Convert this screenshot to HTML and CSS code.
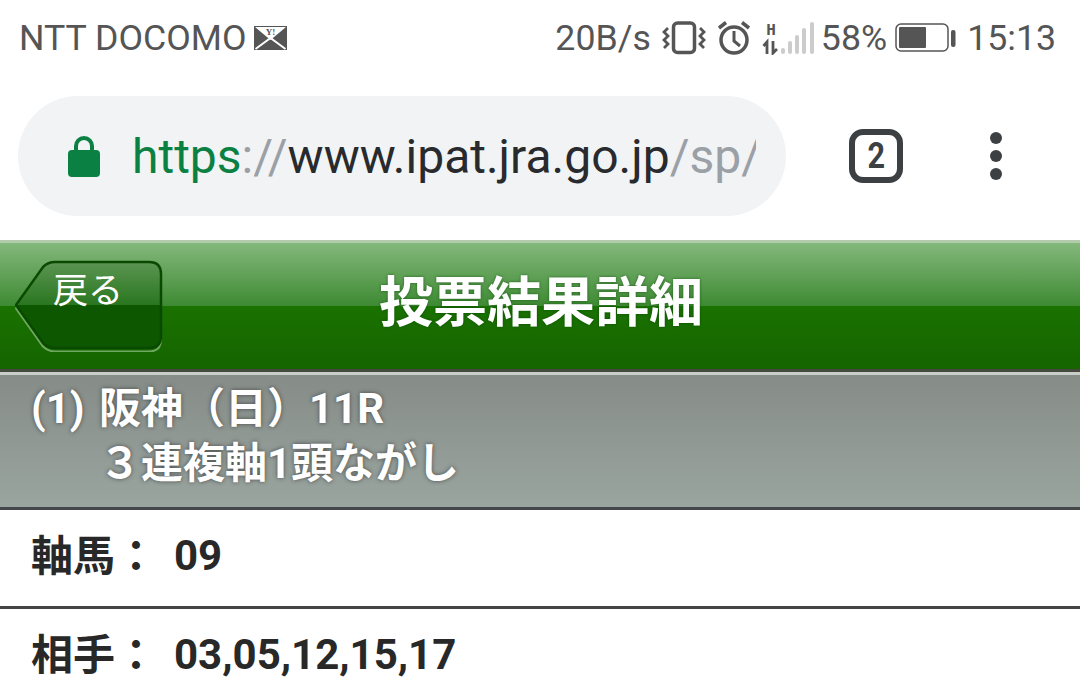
FILE: index.html
```html
<html>
  <head>
    <title>投票結果詳細</title>
    <link rel="stylesheet" href="styles.css">
  </head>
  <body>
    <div class="statusBar">
      <div class="statusLeft">
        <span>NTT DOCOMO</span>
        <svg class="mailIcon" width="33" height="24" viewBox="0 0 33 24">
          <rect width="33" height="24" fill="#555"/>
          <path d="M1 1H32L16.500 14Z" fill="#fff"/>
          <path d="M1.500 23L16.500 12L31.500 23" fill="none" stroke="#fff" stroke-width="2"/>
          <text x="16.500" y="9" font-family="Liberation Serif" font-size="9" font-weight="700" text-anchor="middle" fill="#555">Y!</text>
        </svg>
      </div>
      <div class="statusRight">
        <span class="speed">20B/s</span>
        <svg class="vibrateIcon" width="44" height="34" viewBox="0 0 44 34">
          <rect x="11.500" y="2" width="21" height="29.500" rx="4" fill="none" stroke="#555" stroke-width="3.500"/>
          <path d="M6 6L2 10L6 14L2 18L6 22L2 26M38 6L42 10L38 14L42 18L38 22L42 26" transform="translate(0 1)" fill="none" stroke="#555" stroke-width="2.800"/>
        </svg>
        <svg class="alarmIcon" width="34" height="34" viewBox="0 0 34 34">
          <circle cx="17" cy="19" r="13" fill="none" stroke="#555" stroke-width="3.500"/>
          <path d="M17 10V20L23 25" fill="none" stroke="#555" stroke-width="3"/>
          <path d="M2 7L9 1.500M32 7L25 1.500" stroke="#555" stroke-width="3.500"/>
        </svg>
        <svg class="signalIcon" width="53" height="34" viewBox="0 0 53 34">
          <text x="9" y="14" font-family="Liberation Mono" font-size="16" font-weight="700" text-anchor="middle" fill="#555">H</text>
          <path d="M5 33V21L1.500 25" fill="none" stroke="#555" stroke-width="2.800"/>
          <path d="M11 20V32L15 28" fill="none" stroke="#555" stroke-width="2.800"/>
          <rect x="19" y="27" width="4" height="6" rx="2" fill="#ccc"/>
          <rect x="26" y="20" width="4" height="13" rx="2" fill="#ccc"/>
          <rect x="33" y="14" width="4" height="19" rx="2" fill="#ccc"/>
          <rect x="40" y="7" width="4" height="26" rx="2" fill="#ccc"/>
          <rect x="48" y="1" width="4" height="32" rx="2" fill="#ccc"/>
        </svg>
        <span class="percent">58%</span>
        <svg class="batteryIcon" width="61" height="30" viewBox="0 0 61 30">
          <rect x="1" y="1" width="52" height="27" rx="5" fill="none" stroke="#555" stroke-width="1.500"/>
          <rect x="4" y="4" width="27" height="21" rx="1" fill="#555"/>
          <rect x="56" y="7" width="4.500" height="17" rx="2" fill="#555"/>
        </svg>
        <span class="clock">15:13</span>
      </div>
    </div>

    <div class="toolbar">
      <div class="urlBar">
        <svg class="lockIcon" width="32" height="42" viewBox="0 0 32 42">
          <path d="M8 18V11A8 8 0 0 1 24 11V18" fill="none" stroke="#0b8043" stroke-width="4"/>
          <rect y="15" width="32" height="27" rx="4" fill="#0b8043"/>
        </svg>
        <div class="urlText"><span class="scheme">https</span><span class="sep">://</span><span class="host">www.ipat.jra.go.jp</span><span class="sep">/sp/</span></div>
      </div>
      <div class="tabCount"><span class="tabNumber">2</span></div>
      <svg class="menuIcon" width="14" height="48" viewBox="0 0 14 48">
        <circle cx="7" cy="6" r="6" fill="#3c4043"/>
        <circle cx="7" cy="24" r="6" fill="#3c4043"/>
        <circle cx="7" cy="42" r="6" fill="#3c4043"/>
      </svg>
    </div>

    <div class="pageHeader">
      <div class="backButton">
        <svg class="backShape" width="150" height="92" viewBox="0 0 150 92">
          <defs>
            <linearGradient id="backTop" x1="0" y1="0" x2="0" y2="1">
              <stop offset="0" stop-color="#5b9552"/>
              <stop offset="1" stop-color="#2a7620"/>
            </linearGradient>
          </defs>
          <path d="M1 47L28 8Q33 3 40 3H134Q146 3 146 15V78Q146 90 134 90H40Q33 90 28 85Z" fill="none" stroke="#6fa862" stroke-width="2" transform="translate(0 1.500)"/>
          <path d="M1 45L28 7Q33 2 40 2H134Q146 2 146 14V76Q146 88 134 88H40Q33 88 28 83Z" fill="#0d5700"/>
          <path d="M1 45L28 7Q33 2 40 2H134Q146 2 146 14V45Z" fill="url(#backTop)"/>
          <path d="M1 45L28 7Q33 2 40 2H134Q146 2 146 14V76Q146 88 134 88H40Q33 88 28 83Z" fill="none" stroke="#0a4a00" stroke-width="2.500"/>
        </svg>
        <span class="backLabel">戻る</span>
      </div>
      <h1 class="pageTitle">投票結果詳細</h1>
    </div>

    <div class="raceInfo">
      <div class="raceLine"><span class="raceNo">(1)</span><span>阪神（日）11R</span></div>
      <div class="betLine">３連複軸1頭ながし</div>
    </div>

    <div class="resultRow">
      <span class="rowLabel">軸馬：</span>
      <span class="rowValue">09</span>
    </div>
    <div class="resultRow">
      <span class="rowLabel">相手：</span>
      <span class="rowValue">03,05,12,15,17</span>
    </div>
  </body>
</html>
```

FILE: styles.css
```css
html, body {
  margin: 0;
  padding: 0;
  height: 698px;
  overflow: hidden;
  background: #fff;
}

body {
  font-family: Roboto, "Noto Sans CJK JP", sans-serif;
}

.statusBar {
  height: 76px;
  display: flex;
  justify-content: space-between;
  align-items: center;
  padding: 0 24px 0 19px;
  font-size: 35.700px;
  color: #555;
}

.statusLeft, .statusRight {
  display: flex;
  align-items: center;
}

.mailIcon {
  margin-left: 8px;
}

.vibrateIcon {
  margin-left: 11px;
}

.alarmIcon {
  margin-left: 11px;
}

.signalIcon {
  margin-left: 11px;
}

.percent {
  margin-left: 6px;
}

.batteryIcon {
  margin-left: 8px;
}

.clock {
  margin-left: 11px;
}

.toolbar {
  height: 164px;
  display: flex;
  align-items: flex-start;
  padding: 20px 0 0 18px;
  box-sizing: border-box;
}

.urlBar {
  width: 768px;
  height: 120px;
  box-sizing: border-box;
  padding: 0 30px 0 50px;
  background-color: #f1f3f4;
  border-radius: 60px;
  display: flex;
  align-items: center;
}

.lockIcon {
  flex: none;
  margin-right: 32px;
}

.urlText {
  font-size: 48px;
  white-space: nowrap;
  overflow: hidden;
}

.scheme {
  color: #0b8043;
}

.sep {
  color: #9aa0a6;
}

.host {
  color: #282a2d;
}

.tabCount {
  width: 54px;
  height: 54px;
  box-sizing: border-box;
  margin: 33px 0 0 63px;
  border: 6px solid #3c4043;
  border-radius: 14px;
  color: #3c4043;
  display: flex;
  align-items: center;
  justify-content: center;
}

.tabNumber {
  font-size: 36px;
  font-weight: 700;
  transform: scaleX(0.85);
}

.menuIcon {
  margin: 36px 0 0 86px;
}

.pageHeader {
  height: 132px;
  box-sizing: border-box;
  border-top: 3px solid #b3cdac;
  border-bottom: 3px solid #44483f;
  background: linear-gradient(#84b87c 0, #3e8a33 50%, #1a7200 50%, #156400 100%);
  position: relative;
  display: flex;
  align-items: center;
  justify-content: center;
  padding: 0 0 5px 2px;
}

.backButton {
  position: absolute;
  left: 15px;
  top: 17px;
  width: 150px;
  height: 92px;
}

.backShape {
  position: absolute;
  left: 0;
  top: 0;
}

.backLabel {
  position: absolute;
  left: 38px;
  top: 2px;
  font-size: 35px;
  color: #fff;
}

.pageTitle {
  margin: 0;
  font-size: 54px;
  font-weight: 700;
  color: #fff;
  line-height: 1;
  text-shadow: 0 0 3px rgba(0, 60, 0, 0.6);
}

.raceInfo {
  height: 138px;
  box-sizing: border-box;
  border-top: 3px solid #c9cdc8;
  border-bottom: 3px solid #44464a;
  background: linear-gradient(#868c88, #9aa5a0);
  color: #fff;
  font-size: 42px;
  font-weight: 700;
  line-height: 56px;
  padding: 6px 0 0 31px;
  text-shadow: 0 0 4px rgba(40, 40, 40, 0.7);
}

.raceLine {
  display: flex;
  height: 55px;
}

.raceNo {
  width: 68px;
}

.betLine {
  padding-left: 68px;
}

.resultRow {
  height: 99px;
  box-sizing: border-box;
  border-bottom: 3px solid #444;
  display: flex;
  align-items: center;
  padding: 0 0 6px 31px;
  color: #282828;
  font-weight: 700;
  font-size: 42px;
}

.rowLabel {
  width: 143px;
  margin-bottom: 6px;
}
```
